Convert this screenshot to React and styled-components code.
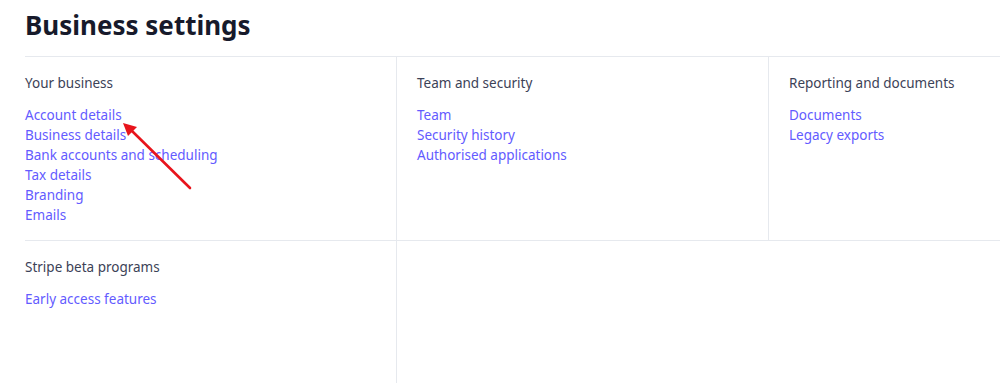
import React from "react";
import styled, { createGlobalStyle } from "styled-components";

const GlobalStyle = createGlobalStyle`
  html, body {
    margin: 0;
    padding: 0;
    background: #ffffff;
    overflow: hidden;
  }
  body {
    font-family: "Noto Sans", "Open Sans", sans-serif;
    -webkit-font-smoothing: antialiased;
  }
`;

const Page = styled.div`
  position: relative;
  width: 1000px;
  height: 383px;
  padding-left: 25px;
  box-sizing: border-box;
  overflow: hidden;
`;

const Title = styled.h1`
  margin: 0;
  padding-top: 7px;
  height: 56px;
  box-sizing: border-box;
  font-size: 26px;
  line-height: 36px;
  font-weight: 700;
  color: #171a2b;
`;

const Grid = styled.div`
  display: grid;
  grid-template-columns: repeat(3, 372px);
  width: 1116px;
  border-top: 1px solid #e6e9ee;
`;

const Cell = styled.div`
  box-sizing: border-box;
  padding: 16px 20px 15px ${(p) => (p.$first ? "0" : "20px")};
  border-right: ${(p) => (p.$divider ? "1px solid #e6e9ee" : "none")};
  border-bottom: ${(p) => (p.$bottom ? "1px solid #e6e9ee" : "none")};
  min-height: ${(p) => (p.$tall ? "143px" : "auto")};
`;

const SectionTitle = styled.div`
  font-size: 13.5px;
  line-height: 20px;
  color: #3c4257;
  margin-bottom: 12px;
`;

const LinkList = styled.ul`
  list-style: none;
  margin: 0;
  padding: 0;
`;

const LinkItem = styled.li`
  font-size: 13.5px;
  line-height: 20px;

  a {
    color: #635bff;
    text-decoration: none;
  }
`;

const Arrow = styled.svg`
  position: absolute;
  left: 118px;
  top: 117px;
  pointer-events: none;
`;

const sections = [
  {
    title: "Your business",
    links: [
      "Account details",
      "Business details",
      "Bank accounts and scheduling",
      "Tax details",
      "Branding",
      "Emails",
    ],
  },
  {
    title: "Team and security",
    links: ["Team", "Security history", "Authorised applications"],
  },
  {
    title: "Reporting and documents",
    links: ["Documents", "Legacy exports"],
  },
];

const renderLinks = (links) => (
  <LinkList>
    {links.map((l) => (
      <LinkItem key={l}>
        <a href="#">{l}</a>
      </LinkItem>
    ))}
  </LinkList>
);

export default function App() {
  return (
    <>
      <GlobalStyle />
      <Page>
        <Title>Business settings</Title>
        <Grid>
          {sections.map((s, i) => (
            <Cell key={s.title} $first={i === 0} $divider={i < 2} $bottom>
              <SectionTitle>{s.title}</SectionTitle>
              {renderLinks(s.links)}
            </Cell>
          ))}
          <Cell $first $divider $tall>
            <SectionTitle>Stripe beta programs</SectionTitle>
            {renderLinks(["Early access features"])}
          </Cell>
        </Grid>
        <Arrow width="80" height="80" viewBox="0 0 80 80">
          <line x1="72" y1="71" x2="14" y2="14" stroke="#e8141c" strokeWidth="2.6" strokeLinecap="round" />
          <polygon points="5,6 19,10 10,19" fill="#e8141c" />
        </Arrow>
      </Page>
    </>
  );
}
